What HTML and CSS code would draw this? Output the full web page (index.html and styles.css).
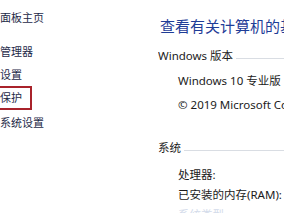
FILE: index.html
```html
<!DOCTYPE html>
<html lang="zh-CN">
<head>
<meta charset="utf-8">
<title>系统</title>
<link rel="stylesheet" href="styles.css">
</head>
<body>
<div class="page">
  <nav class="side">
    <ul class="links">
      <li class="link first">控制面板主页</li>
      <li class="link second">设备管理器</li>
      <li class="link third">远程设置</li>
      <li class="link boxed"><span class="box">系统保护</span></li>
      <li class="link fifth">高级系统设置</li>
    </ul>
  </nav>
  <main class="main">
    <h1 class="title">查看有关计算机的基本信息</h1>
    <section class="group">
      <div class="group-head"><span class="group-label">Windows 版本</span><span class="rule"></span></div>
      <div class="row">Windows 10 专业版</div>
      <div class="row">© 2019 Microsoft Corporation。保留所有权利。</div>
    </section>
    <section class="group group-system">
      <div class="group-head"><span class="group-label">系统</span><span class="rule"></span></div>
      <div class="row small">处理器:</div>
      <div class="row small">已安装的内存(RAM):</div>
      <div class="row small faint">系统类型:</div>
    </section>
  </main>
</div>
</body>
</html>
```
FILE: styles.css
```css
html, body {
  margin: 0;
  padding: 0;
  background: #ffffff;
}
body {
  width: 284px;
  height: 213px;
  overflow: hidden;
  font-family: "Noto Sans", "Noto Sans CJK SC", sans-serif;
  font-size: 11px;
  color: #1b1b1b;
}
.page {
  display: flex;
  width: 284px;
  height: 213px;
  overflow: hidden;
}
.side {
  width: 158px;
  flex-shrink: 0;
  overflow: hidden;
}
.links {
  list-style: none;
  margin: 0 0 0 -22px;
  padding: 0;
  color: #1e2a48;
  white-space: nowrap;
}
.link {
  line-height: 24px;
}
.first {
  margin-top: 6px;
}
.second {
  margin-top: 10px;
}
.third {
  line-height: 22px;
}
.boxed {
  line-height: 20px;
}
.box {
  display: inline-block;
  border: 2px solid #a9232b;
  padding: 0 8px 0 6px;
  margin-left: -8px;
}
.fifth {
  line-height: 26px;
}
.main {
  flex: 1;
  min-width: 0;
  overflow: hidden;
  white-space: nowrap;
  font-size: 11.5px;
}
.title {
  margin: 15px 0 0 2px;
  font-size: 15px;
  line-height: 22px;
  font-weight: normal;
  color: #1f3d97;
}
.group {
  margin-top: 10px;
}
.group-system {
  margin-top: 22px;
}
.group-head {
  display: flex;
  align-items: center;
  line-height: 18px;
  height: 18px;
  margin-bottom: 4px;
}
.group-label {
  flex-shrink: 0;
}
.rule {
  flex: 1;
  height: 0;
  border-top: 1px solid #d9dde3;
  margin: 4px 0 0 3px;
}
.group-system .group-head {
  margin-bottom: 8px;
}
.row {
  padding-left: 20px;
  line-height: 24px;
}
.row.small {
  line-height: 20px;
}
.faint {
  color: #d3dbea;
}
```
